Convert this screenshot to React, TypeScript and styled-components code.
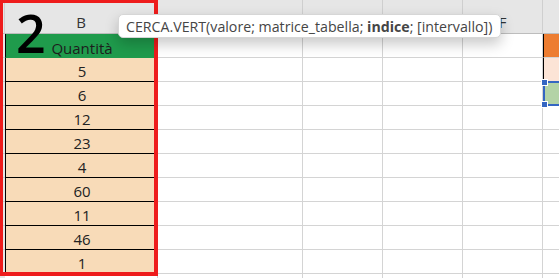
import React from "react";
import styled, { createGlobalStyle } from "styled-components";

const GlobalStyle = createGlobalStyle`
  html, body {
    margin: 0;
    padding: 0;
    background: #fff;
  }
  body {
    font-family: "Open Sans", "Liberation Sans", sans-serif;
    overflow: hidden;
  }
`;

const SheetWrap = styled.div`
  position: relative;
  width: 559px;
  height: 278px;
  overflow: hidden;
  background: #fff;
`;

const Grid = styled.div`
  display: grid;
  grid-template-columns: 5px 153px 145px 80px 80px 80px 40px;
  grid-template-rows: 34px repeat(11, 24px);
`;

const ColHead = styled.div<{ $edge?: boolean }>`
  box-sizing: border-box;
  background: #e6e6e6;
  border-bottom: 1px solid #bdbdbd;
  border-right: 1px solid ${(p) => (p.$edge ? "#e6e6e6" : "#cfcfcf")};
  display: flex;
  align-items: center;
  justify-content: center;
  padding-top: 10px;
  font-size: 15px;
  color: #333;
`;

const Cell = styled.div`
  box-sizing: border-box;
  border-right: 1px solid #d4d4d4;
  border-bottom: 1px solid #d4d4d4;
`;

const RowHead = styled.div`
  box-sizing: border-box;
  background: #e6e6e6;
  border-bottom: 1px solid #cfcfcf;
`;

const DataCell = styled.div<{ $head?: boolean }>`
  box-sizing: border-box;
  background: ${(p) => (p.$head ? "#1f9b4c" : "#f8dbb8")};
  border-left: 1px solid #000;
  border-bottom: 1px solid ${(p) => (p.$head ? "#1f9b4c" : "#000")};
  display: flex;
  align-items: center;
  justify-content: center;
  font-size: 15px;
  color: ${(p) => (p.$head ? "#1d1d1d" : "#222")};
  padding-top: ${(p) => (p.$head ? "5px" : "2px")};
`;

const ColorCell = styled.div<{ $bg: string }>`
  box-sizing: border-box;
  background: ${(p) => p.$bg};
  border-left: 1px solid #000;
  border-bottom: 1px solid #d4d4d4;
`;

const SelectedCell = styled.div`
  position: relative;
  box-sizing: border-box;
  background: #b3d3a6;
  border: 2px solid #3466c2;
  margin-top: -1px;
  height: 25px;
`;

const Handle = styled.span<{ $bottom?: boolean }>`
  position: absolute;
  left: -4px;
  ${(p) => (p.$bottom ? "bottom: -4px;" : "top: -4px;")}
  width: 5px;
  height: 5px;
  background: #3466c2;
  border: 1px solid #fff;
`;

const RedFrame = styled.div`
  position: absolute;
  left: -1px;
  top: -1px;
  width: 159px;
  height: 277px;
  box-sizing: border-box;
  border: 4px solid #ee1c1c;
  pointer-events: none;
`;

const BigNumber = styled.div`
  position: absolute;
  left: 16px;
  top: 7px;
  font-family: "Open Sans", sans-serif;
  font-size: 52px;
  font-weight: 600;
  color: #000;
  line-height: 52px;
`;

const Tooltip = styled.div`
  position: absolute;
  left: 118px;
  top: 14px;
  height: 24px;
  padding: 0 8px 0 7px;
  box-sizing: border-box;
  display: flex;
  align-items: center;
  background: #fff;
  border: 1px solid #d6d6d6;
  border-radius: 5px;
  box-shadow: 0 6px 14px rgba(0, 0, 0, 0.22);
  font-family: "Open Sans", sans-serif;
  font-size: 14.2px;
  color: #454545;
  white-space: nowrap;

  b {
    font-weight: 700;
  }
`;

const values = [5, 6, 12, 23, 4, 60, 11, 46, 1];
// C, D, E headers sit under the tooltip and are not visible
const headers = ["", "B", "", "", "", "F", ""];

const App = () => {
  return (
    <SheetWrap>
      <GlobalStyle />
      <Grid>
        {headers.map((h, i) => (
          <ColHead key={"h" + i} $edge={i === 6}>
            {h}
          </ColHead>
        ))}

        <RowHead />
        <DataCell $head>Quantità</DataCell>
        <Cell />
        <Cell />
        <Cell />
        <Cell />
        <ColorCell $bg="#ed7d31" />

        {values.map((v, r) => (
          <React.Fragment key={"r" + r}>
            <RowHead />
            <DataCell>{v}</DataCell>
            <Cell />
            <Cell />
            <Cell />
            <Cell />
            {r === 0 && <ColorCell $bg="#fce4d6" />}
            {r === 1 && (
              <SelectedCell>
                <Handle />
                <Handle $bottom />
              </SelectedCell>
            )}
            {r > 1 && <Cell />}
          </React.Fragment>
        ))}

        <RowHead />
        <Cell />
        <Cell />
        <Cell />
        <Cell />
        <Cell />
        <Cell />
      </Grid>

      <RedFrame />
      <BigNumber>2</BigNumber>
      <Tooltip>
        CERCA.VERT(valore; matrice_tabella;&nbsp;<b>indice</b>; [intervallo])
      </Tooltip>
    </SheetWrap>
  );
};

export default App;
